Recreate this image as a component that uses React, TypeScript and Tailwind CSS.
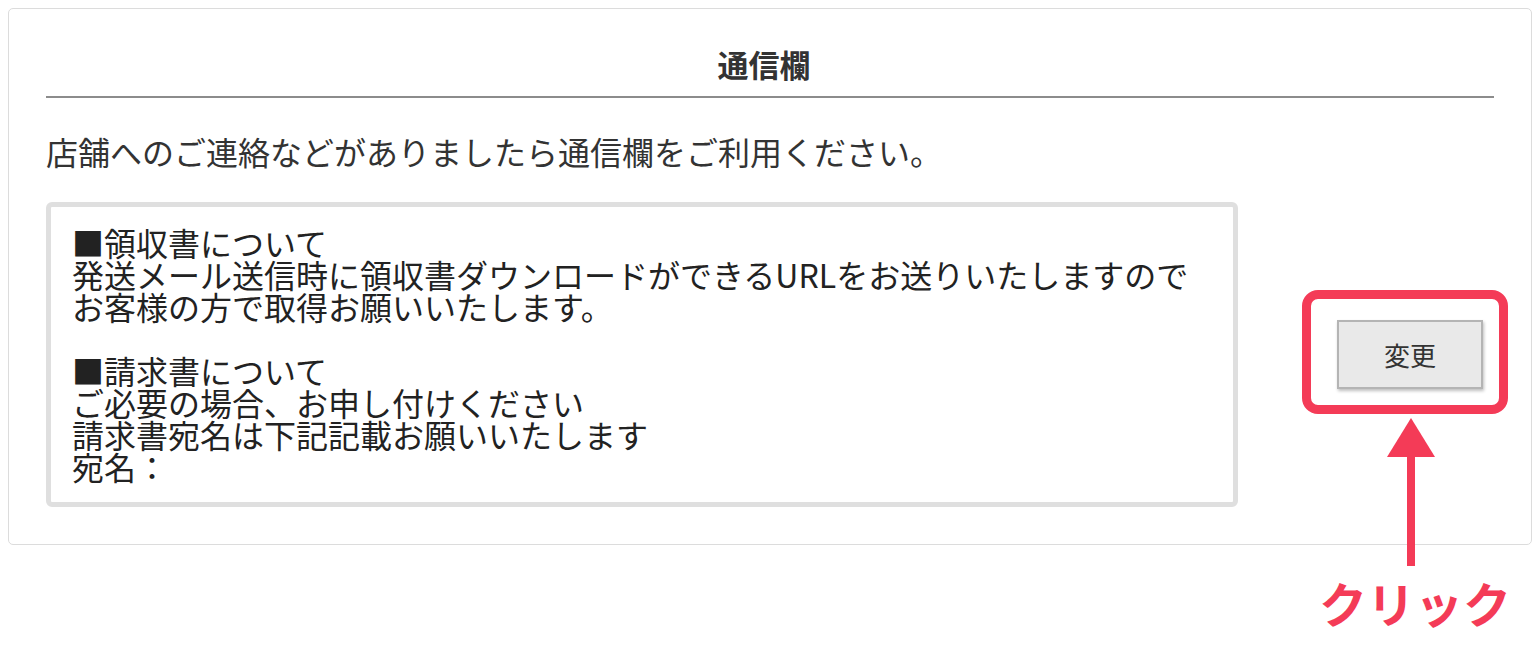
export default function App() {
  const font = { fontFamily: '"Noto Sans CJK JP", "Noto Sans", sans-serif' };
  const note = [
    "■領収書について",
    "発送メール送信時に領収書ダウンロードができるURLをお送りいたしますので",
    "お客様の方で取得お願いいたします。",
    "",
    "■請求書について",
    "ご必要の場合、お申し付けください",
    "請求書宛名は下記記載お願いいたします",
    "宛名：",
  ];

  return (
    <div className="relative w-[1540px] h-[650px] bg-white p-2" style={font}>
      <div className="border border-[#dcdcdc] rounded-[5px] h-[537px] pt-[35px] pl-[37px] pr-[37px]">
        <h2 className="text-center pr-[12px] text-[31px] leading-[40px] font-bold text-[#333]">通信欄</h2>
        <div className="mt-[12px] h-[2px] bg-[#8c8c8c]" />
        <p className="mt-[33px] text-[32px] leading-[40px] text-[#333]">
          店舗へのご連絡などがありましたら通信欄をご利用ください。
        </p>
        <div className="mt-[31px] flex">
          <div className="w-[1192px] h-[305px] border-[5px] border-[#dfdfdf] rounded-[6px] pl-[21px] pt-[19px] text-[32px] leading-[32px] text-[#222]">
            {note.map((line, i) => (
              <div key={i} className="h-[32px] whitespace-nowrap">
                {line}
              </div>
            ))}
          </div>
          <div className="flex-1 flex items-center justify-end pr-[11px]">
            <button className="w-[146px] h-[69px] bg-[#e9e9e9] border-2 border-[#b4b4b4] shadow-[1px_2px_3px_rgba(0,0,0,0.25)] text-[26px] text-[#333]">
              変更
            </button>
          </div>
        </div>
      </div>

      {/* annotation overlay */}
      <div className="absolute left-[1302px] top-[290px] w-[206px] h-[124px] border-[9px] border-[#f43b57] rounded-[16px]" />
      <svg className="absolute left-[1380px] top-[416px]" width="62" height="152" viewBox="0 0 62 152">
        <polygon points="31,2 55,41 7,41" fill="#f43b57" />
        <rect x="27" y="38" width="8" height="112" fill="#f43b57" />
      </svg>
      <div className="absolute left-[1319px] top-[572px] text-[48px] leading-[60px] font-bold text-[#f43b57]">
        クリック
      </div>
    </div>
  );
}
